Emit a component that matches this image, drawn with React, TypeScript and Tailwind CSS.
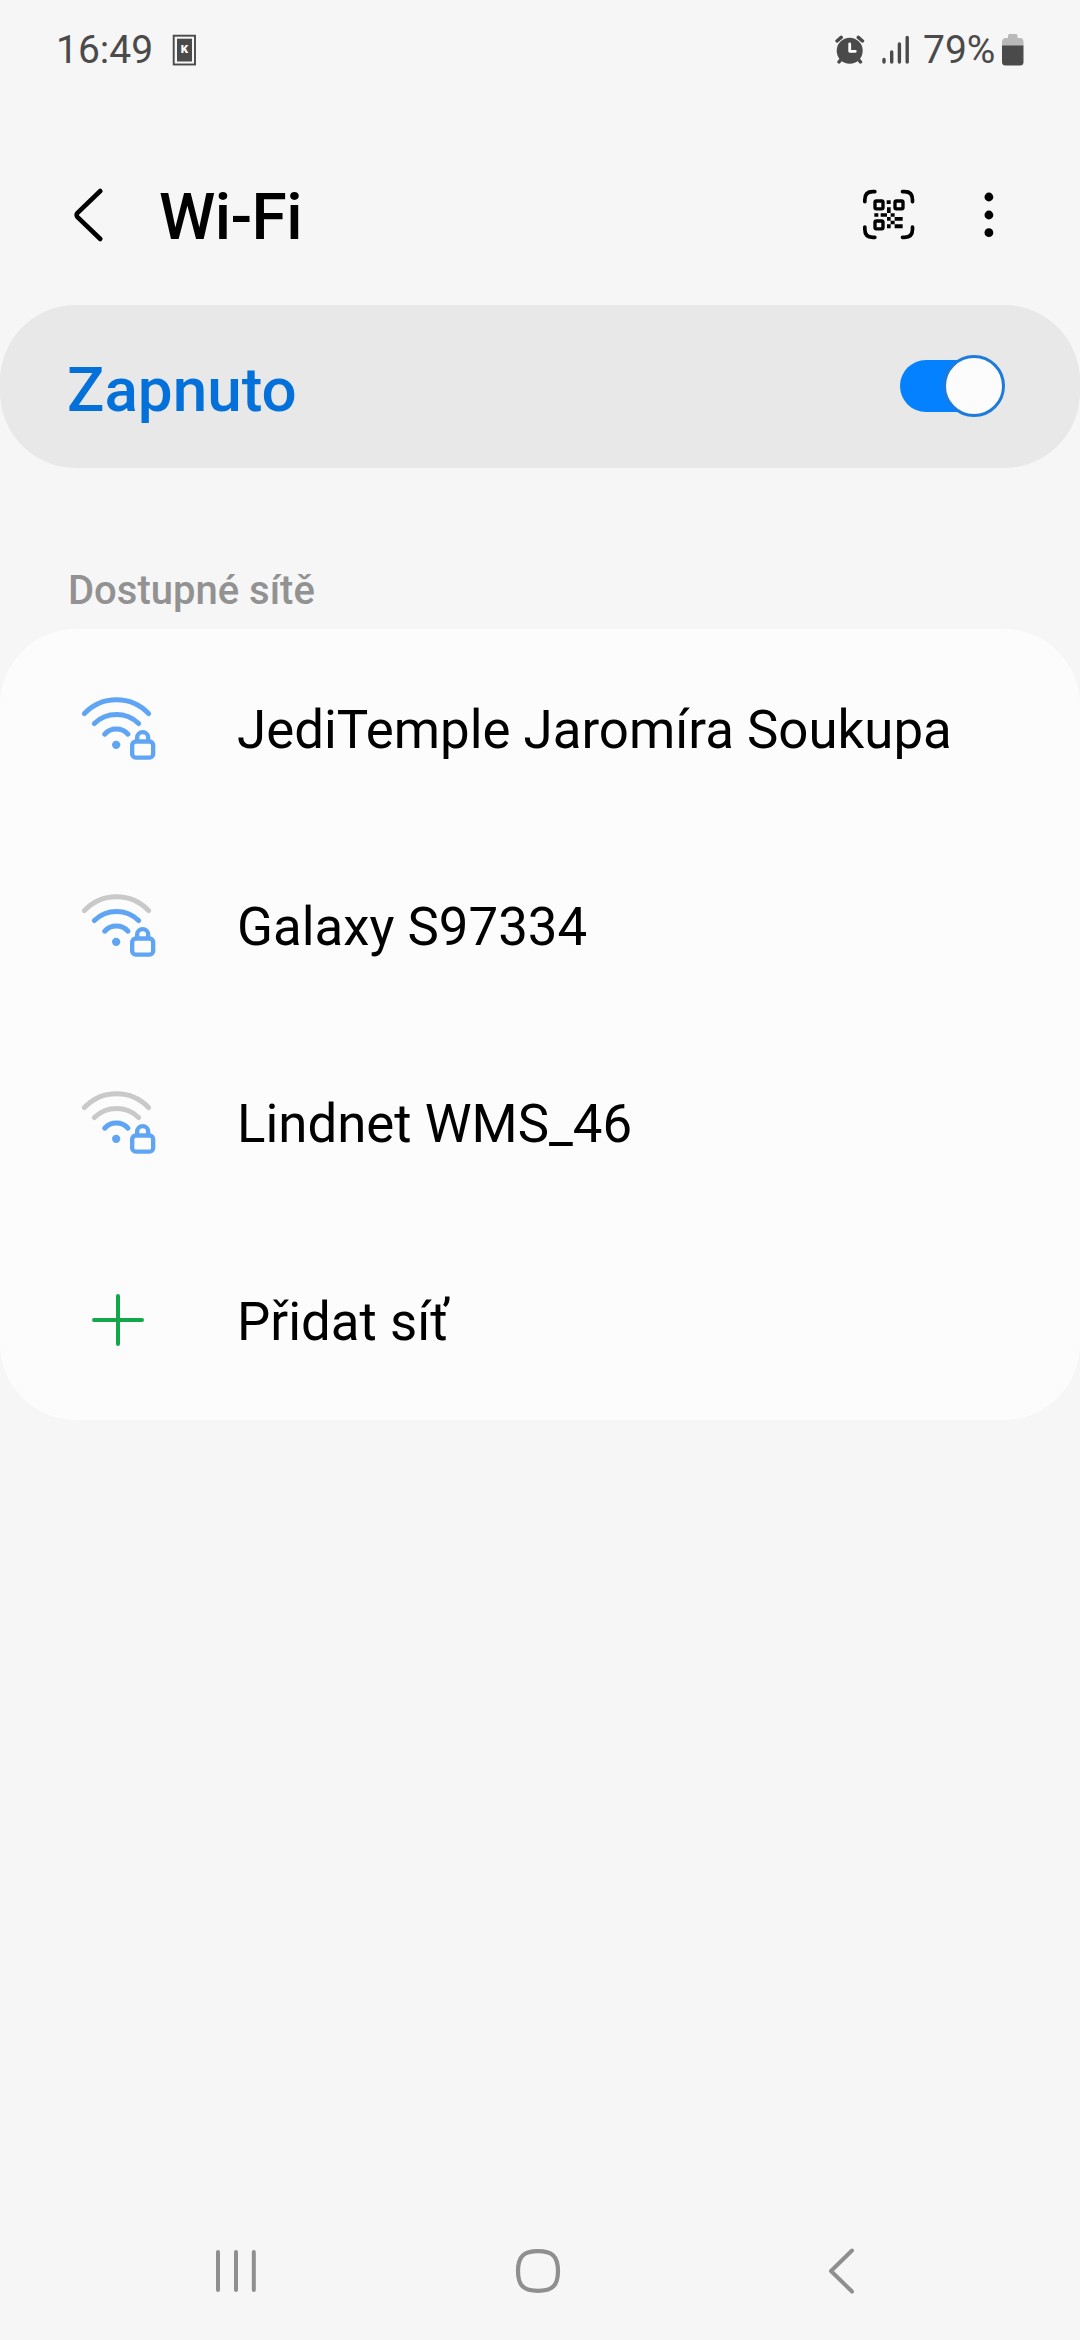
import React from "react";

const BLUE = "#5fa5f4";
const GRAY = "#c9c9c9";

function WifiLock({ level }: { level: number }) {
  return (
    <svg className="ml-20 h-[66px] w-[77.33px] shrink-0" viewBox="240 432 232 198" fill="none" strokeLinecap="round" strokeLinejoin="round">
      <path d="M253 488A132 132 0 0 1 446 488" stroke={level > 2 ? BLUE : GRAY} strokeWidth="15" />
      <path d="M283 517.500A95.500 95.500 0 0 1 416 517.500" stroke={level > 1 ? BLUE : GRAY} strokeWidth="15" />
      <path d="M314 549.500A48 48 0 0 1 384 549.500" stroke={BLUE} strokeWidth="15" />
      <circle cx="348.500" cy="581.500" r="12.500" fill={BLUE} />
      <path d="M411.500 571V560A16.500 16.500 0 0 1 444.500 560V571" stroke={BLUE} strokeWidth="13" strokeLinecap="butt" />
      <rect x="396.500" y="571.500" width="63" height="48.500" rx="11" stroke={BLUE} strokeWidth="13" />
    </svg>
  );
}

function StatusBar() {
  return (
    <div className="flex h-[100px] items-center pr-14 pl-14 text-[39px] leading-none text-[#4a4a4a]">
      <span className="w-[116px]">16:49</span>
      <svg className="h-8 w-6" viewBox="0 0 24 32">
        <rect x="1.700" y="1.700" width="21.300" height="28.800" fill="none" stroke="#4a4a4a" strokeWidth="1.900" />
        <rect x="5" y="4.700" width="15" height="22.800" fill="#4a4a4a" />
        <text x="12.400" y="19.300" fontSize="11.500" fontWeight="900" textAnchor="middle" fill="#fff">K</text>
      </svg>
      <svg className="ml-auto h-[30px] w-[30px]" viewBox="0 0 30 30">
        <g fill="none" stroke="#4a4a4a" strokeWidth="3.400" strokeLinecap="round">
          <path d="M2 6L6.200 2.400M27.500 6L23.300 2.400M6 24.500L4 27M23.500 24.500L25.500 27" />
        </g>
        <circle cx="14.700" cy="15.700" r="13" fill="#4a4a4a" />
        <path d="M14.700 9V16.300H20.300" fill="none" stroke="#fff" strokeWidth="2.800" strokeLinecap="round" strokeLinejoin="round" />
      </svg>
      <svg className="ml-[17px] h-[30px] w-7" viewBox="0 0 28 30" stroke="#4a4a4a" strokeWidth="3.400" strokeLinecap="round">
        <path d="M2 24.500V27M9.700 17V27M17.400 9V27M25.200 2.500V27" />
      </svg>
      <span className="ml-[13px] w-[79px] whitespace-nowrap">79%</span>
      <svg className="h-8 w-[22px]" viewBox="0 0 22 32">
        <path d="M6 4V1.500Q6 0 7.500 0H14Q15.500 0 15.500 1.500V4H18Q21.500 4 21.500 8V12H0V8Q0 4 4 4Z" fill="#b9b9b9" />
        <path d="M0 11.500H21.500V28Q21.500 31.500 18 31.500H3.500Q0 31.500 0 28Z" fill="#4a4a4a" />
      </svg>
    </div>
  );
}

function Header() {
  return (
    <header className="flex h-[205px] items-center pt-[25px]">
      <svg className="ml-[70px] h-14 w-9" viewBox="70 187 36 56" fill="none" stroke="#000" strokeWidth="4.600" strokeLinecap="round" strokeLinejoin="round">
        <path d="M100.300 191L77.300 213.200Q76 215 77.300 216.800L100.300 239" />
      </svg>
      <h1 className="relative top-[3px] ml-[53px] text-[64px] leading-none font-medium tracking-[-0.6px] text-black">Wi-Fi</h1>
      <svg className="ml-auto h-[52px] w-[53.33px]" viewBox="64 56 160 156">
        <g fill="none" stroke="#000" strokeWidth="11" strokeLinecap="round">
          <path d="M72.500 94V88Q72.500 64 96 64H102.500M185.500 64H192Q215.500 64 215.500 88V94M72.500 170V177Q72.500 201 96 201H102.500M185.500 201H192Q215.500 201 215.500 177V170" />
        </g>
        <g fill="none" stroke="#000" strokeWidth="10">
          <rect x="103" y="92" width="24" height="23.500" rx="4" />
          <rect x="163" y="92" width="24" height="23.500" rx="4" />
          <rect x="103" y="152" width="24" height="23.500" rx="4" />
        </g>
        <path d="M138 90h12v11h-12zM139 111h11v17h-11zM101 129h12v10h-12zM120 129h19v10h-19zM150 129h12v10h-12zM139 140h11v11h-11zM162 140h24v11h-24zM150 151h12v11h-12zM139 162h11v12h-11zM162 162h24v12h-24z" />
      </svg>
      <svg className="mr-[83px] ml-[66px] h-12 w-4" viewBox="0 0 16 48">
        <circle cx="7.900" cy="6" r="4.400" />
        <circle cx="7.900" cy="24" r="4.400" />
        <circle cx="7.900" cy="41.700" r="4.400" />
      </svg>
    </header>
  );
}

function Row({ label, icon, tall }: { label: string; icon: React.ReactNode; tall?: boolean }) {
  return (
    <li className={tall ? "flex h-[200px] items-center" : "flex h-[197px] items-center"}>
      <div className="w-[237px]">{icon}</div>
      <span className="relative top-[2.5px] text-[52.8px] leading-none whitespace-nowrap text-black">{label}</span>
    </li>
  );
}

export default function App() {
  return (
    <div className="flex h-[2340px] w-[1080px] flex-col overflow-hidden bg-[#f6f6f6] font-['Roboto',sans-serif]">
      <StatusBar />
      <Header />
      <section className="flex h-[163px] items-center justify-between rounded-[76px] bg-[#e8e8e8] pr-[75px] pl-[67px]">
        <span className="relative top-[3px] text-[62px] leading-none font-medium text-[#0371d9]">Zapnuto</span>
        <div className="mb-[2px] flex h-[62px] w-[105px] items-center">
          <div className="h-[52px] w-[90px] shrink-0 rounded-full bg-[#0381fe]" />
          <div className="-ml-[47px] size-[62px] shrink-0 rounded-full border-3 border-[#1f7bda] bg-[#fcfcfc]" />
        </div>
      </section>
      <h2 className="flex h-[161px] items-end pb-[18px] pl-[68px] text-[40px] leading-[40px] font-medium text-[#929292]">Dostupné sítě</h2>
      <ul className="flex flex-col rounded-[76px] bg-[#fcfcfc]">
        <Row label="JediTemple Jaromíra Soukupa" icon={<WifiLock level={3} />} />
        <Row label="Galaxy S97334" icon={<WifiLock level={2} />} />
        <Row label="Lindnet WMS_46" icon={<WifiLock level={1} />} />
        <Row
          label="Přidat síť"
          tall
          icon={
            <svg className="ml-[90px] size-14" viewBox="0 0 56 56" stroke="#13a74b" strokeWidth="4" strokeLinecap="round">
              <path d="M4 28H52M28 4V52" />
            </svg>
          }
        />
      </ul>
      <nav className="mt-auto flex h-[138px] items-center pl-[212px]">
        <svg className="h-12 w-12" viewBox="212 2247 48 48" stroke="#8f8f8f" strokeWidth="4" strokeLinecap="round">
          <path d="M218 2252V2290M236 2252V2290M253.800 2252V2290" />
        </svg>
        <svg className="ml-[254px] h-12 w-12" viewBox="0 0 48 48" fill="none" stroke="#8f8f8f" strokeWidth="4.200">
          <path d="M24 4.100C38 4.100 44 9 44 24C44 39 38 43.900 24 43.900C10 43.900 4 39 4 24C4 9 10 4.100 24 4.100Z" />
        </svg>
        <svg className="ml-[264px] h-12 w-8" viewBox="826 2247 32 48" fill="none" stroke="#8f8f8f" strokeWidth="4" strokeLinecap="round" strokeLinejoin="round">
          <path d="M852 2250.500L831 2271L852 2291.500" />
        </svg>
      </nav>
    </div>
  );
}
